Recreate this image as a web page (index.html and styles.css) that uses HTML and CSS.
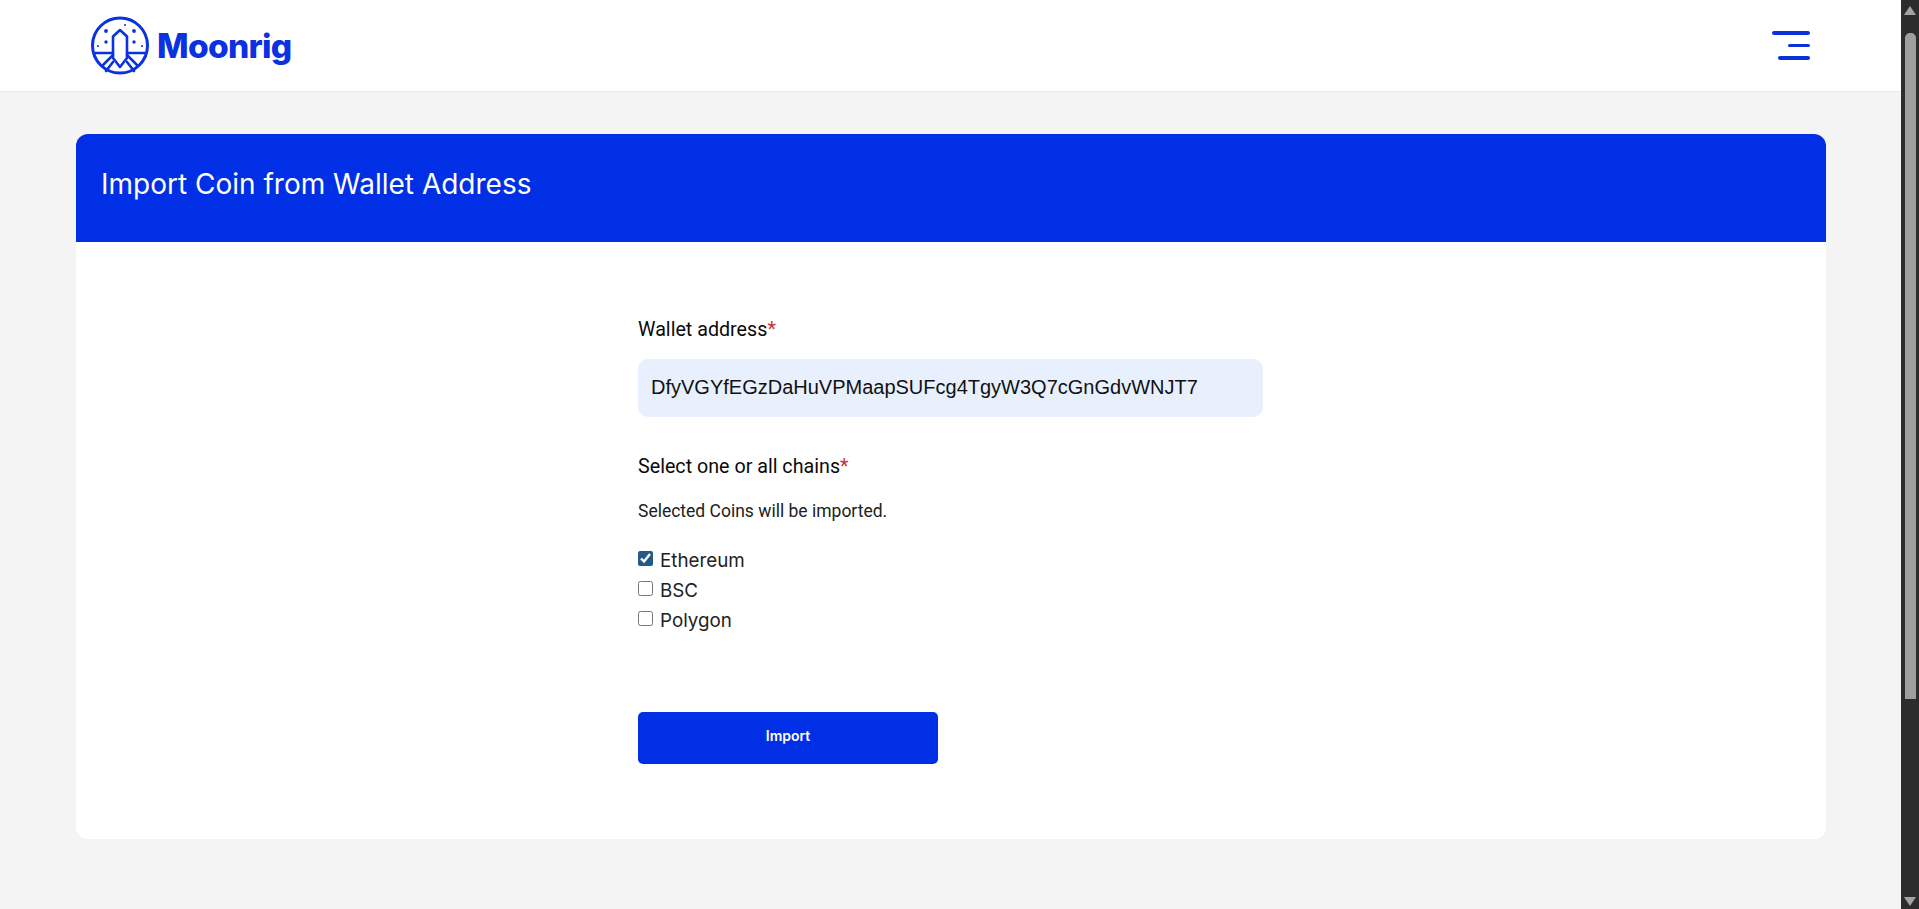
FILE: index.html
```html
<!DOCTYPE html>
<html lang="en">
<head>
<meta charset="utf-8">
<title>Moonrig</title>
<link rel="stylesheet" href="styles.css">
</head>
<body>
<div class="window">
  <div class="page">
    <header class="topbar">
      <a class="brand" href="#">
        <svg class="brand-mark" viewBox="0 0 58 60" fill="none" stroke="#0a32e0" stroke-width="2.600" stroke-linejoin="round" stroke-linecap="round">
          <circle cx="29" cy="29.500" r="27.500" stroke-width="3"/>
          <path d="M29 14 L22 20.500 V42 L29 51 L36 42 V20.500 Z"/>
          <path d="M3 37 H22 M36 37 H55"/>
          <path d="M11 50 L22 39 M47 50 L36 39 M15 55 L22 46 M43 55 L36 46"/>
          <g fill="#0a32e0" stroke="none">
            <circle cx="15" cy="15" r="1.900"/><circle cx="43" cy="15" r="1.900"/>
            <circle cx="15" cy="26" r="1.700"/><circle cx="43" cy="26" r="1.700"/>
            <circle cx="34" cy="9" r="1"/><circle cx="7" cy="30" r="1"/><circle cx="51" cy="30" r="1"/>
          </g>
        </svg>
        <span class="brand-name">Moonrig</span>
      </a>
      <button class="menu-btn" type="button" aria-label="Menu">
        <span class="menu-line menu-line-long"></span>
        <span class="menu-line menu-line-short"></span>
        <span class="menu-line menu-line-mid"></span>
      </button>
    </header>
    <main class="content">
      <section class="card">
        <h1 class="card-title">Import Coin from Wallet Address</h1>
        <form class="form">
          <label class="field-label">Wallet address<span class="req">*</span></label>
          <input class="address" type="text" value="DfyVGYfEGzDaHuVPMaapSUFcg4TgyW3Q7cGnGdvWNJT7">
          <div class="field-label chains-label">Select one or all chains<span class="req">*</span></div>
          <p class="hint">Selected Coins will be imported.</p>
          <div class="chains">
            <label class="chain"><input type="checkbox" checked><span>Ethereum</span></label>
            <label class="chain"><input type="checkbox"><span>BSC</span></label>
            <label class="chain"><input type="checkbox"><span>Polygon</span></label>
          </div>
          <button class="submit" type="button">Import</button>
        </form>
      </section>
    </main>
  </div>
  <div class="scrollbar" aria-hidden="true">
    <span class="arrow arrow-up"></span>
    <span class="thumb"></span>
    <span class="arrow arrow-down"></span>
  </div>
</div>
</body>
</html>
```
FILE: styles.css
```css
* { box-sizing: border-box; }
html, body { margin: 0; height: 100%; overflow: hidden; }
body { background: #f4f4f4; font-family: Inter, "Liberation Sans", sans-serif; color: #111; }
.window { display: flex; height: 909px; }
.page { flex: 1; min-width: 0; display: flex; flex-direction: column; }

.topbar {
  height: 92px; flex: none; background: #fff; border-bottom: 1px solid #ebebeb;
  display: flex; align-items: center; justify-content: space-between;
  padding: 0 91px 0 91px;
}
.brand { display: flex; align-items: center; gap: 8px; text-decoration: none; }
.brand-mark { width: 58px; height: 60px; display: block; }
.brand-name { font-size: 33.500px; font-weight: 800; color: #0a32e0; letter-spacing: -0.7px; line-height: 44px; }
.menu-btn { width: 38px; padding: 0; border: 0; background: none; display: flex; flex-direction: column; align-items: flex-end; gap: 9px; }
.menu-line { display: block; height: 3.500px; border-radius: 2px; background: #0a32d8; }
.menu-line-long { width: 38px; }
.menu-line-short { width: 22px; }
.menu-line-mid { width: 32px; }

.content { flex: 1; padding: 42px 75px 0 76px; }
.card { background: #fff; border-radius: 12px; height: 705px; overflow: hidden; }
.card-title {
  margin: 0; height: 108px; padding: 0 25px 8px; background: #002fe6; color: #fff;
  font-size: 28px; font-weight: 400; display: flex; align-items: center;
}
.form { width: 625px; margin-left: 562px; padding-top: 76px; display: flex; flex-direction: column; align-items: flex-start; }
.field-label { font-family: Roboto, sans-serif; font-size: 19.700px; font-weight: 400; line-height: 24px; color: #0a0a0a; }
.req { color: #c9303a; }
.address {
  width: 625px; height: 58px; margin-top: 17px; padding: 0 13px 1px; border: 0; border-radius: 10px;
  background: #e8f0fd; color: #111; font-family: "Liberation Sans", sans-serif; font-size: 20px; outline: none;
}
.chains-label { margin-top: 38px; }
.hint { margin: 22px 0 0; font-family: Roboto, sans-serif; font-size: 17.500px; line-height: 20px; color: #222; }
.chains { margin-top: 24px; display: flex; flex-direction: column; }
.chain { display: flex; align-items: center; height: 30px; font-size: 18.800px; color: #222; }
.chain input { width: 15px; height: 15px; margin: 0 7px 3px 0; accent-color: #245a85; }
.submit {
  width: 300px; height: 52px; margin-top: 77px; padding: 0 0 5px; border: 0; border-radius: 5px;
  background: #002fe6; color: #fff; font-family: Inter, sans-serif; font-size: 14px; font-weight: 600;
}

.scrollbar { width: 18px; flex: none; background: #2c2c2c; display: flex; flex-direction: column; align-items: center; padding: 6px 0 3px; }
.arrow { width: 0; height: 0; border-left: 6px solid transparent; border-right: 6px solid transparent; flex: none; }
.arrow-up { border-bottom: 9px solid #a3a3a3; }
.arrow-down { border-top: 9px solid #a3a3a3; margin-top: auto; }
.thumb { width: 11px; height: 666px; margin-top: 18px; background: #9f9f9f; border-radius: 5px 5px 0 0; flex: none; }
```
